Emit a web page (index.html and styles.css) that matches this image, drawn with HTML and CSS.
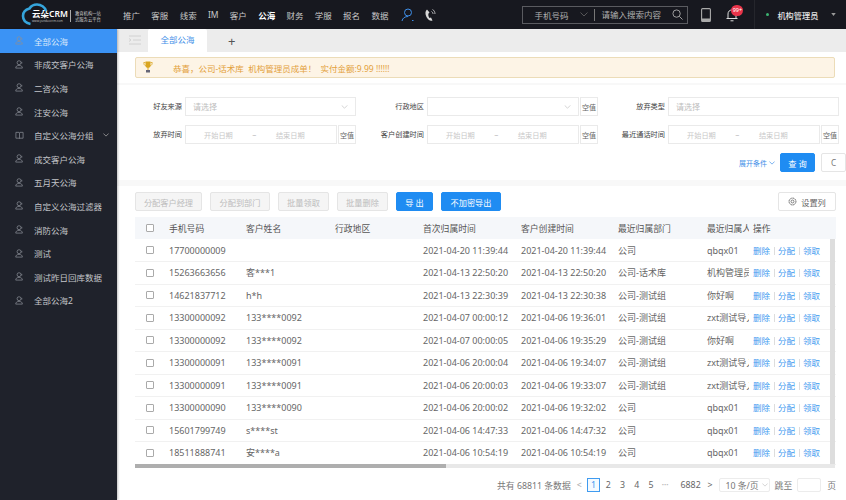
FILE: index.html
```html
<!DOCTYPE html>
<html lang="zh">
<head>
<meta charset="utf-8">
<title>全部公海</title>
<link rel="stylesheet" href="styles.css">
</head>
<body>
<div class="app">
  <header class="topbar">
    <div class="logo">
      <svg class="logo-cloud" viewBox="0 0 30 24" width="30" height="24"><path d="M25 8C24 4 20 1.500 16 1.500 12 1.500 10 3 8.500 5.500 4.500 6.500 2 9 2 13 2 17 4.500 20 9.500 21" fill="none" stroke="#35a5dc" stroke-width="2.600"/></svg>
      <div class="logo-main"><span class="logo-name">云朵CRM</span><span class="logo-url">www.yunduocrm.com</span></div>
      <div class="logo-sub"><span>教育机构一站</span><span>式服务云平台</span></div>
    </div>
    <nav class="nav">
      <a>推广</a><a>客服</a><a>线索</a><a>IM</a><a>客户</a><a class="on">公海</a><a>财务</a><a>学服</a><a>报名</a><a>数据</a>
    </nav>
    <svg class="ic-user" viewBox="0 0 14 14" width="14" height="14"><circle cx="7" cy="4.500" r="3.500" fill="none" stroke="#3f8fe8" stroke-width="1"/><path d="M1 13c.5-3 3-4.500 6-4.500M11 12.500h1.500" fill="none" stroke="#3f8fe8" stroke-width="1"/></svg>
    <svg class="ic-call" viewBox="0 0 14 14" width="14" height="14"><path d="M4 1.500C2 3 2 6 3.500 9s4 4.500 6 3.500l-1.500-3-1.500.5C5.500 9 5 6.500 5.500 5.500L6.500 4.500z" fill="#d8d8d8"/><path d="M8.500 3.500c1 .5 1.500 1.500 1.500 2.500M9.500 1.500c1.500.7 2.500 2.500 2.500 4.500" fill="none" stroke="#d8d8d8" stroke-width=".8"/></svg>
    <div class="search">
      <span class="search-type">手机号码</span>
      <svg class="chev-dark" viewBox="0 0 8 5" width="8" height="5"><path d="M.5.500 4 4 7.500.500" fill="none" stroke="#666" stroke-width=".8"/></svg>
      <span class="search-hint">请输入搜索内容</span>
      <svg class="search-ic" viewBox="0 0 12 12" width="11" height="11"><circle cx="5" cy="5" r="4" fill="none" stroke="#aaa" stroke-width="1"/><path d="m8 8 3.500 3.500" stroke="#aaa" stroke-width="1"/></svg>
    </div>
    <svg class="ic-pad" viewBox="0 0 10 14" width="10" height="14"><rect x=".6" y=".6" width="8.800" height="12.800" rx="1" fill="none" stroke="#aaa" stroke-width="1.100"/><rect x="1" y="10.500" width="8" height="3" fill="#aaa"/></svg>
    <div class="bell">
      <svg viewBox="0 0 12 14" width="12" height="14"><path d="M2 10.500V6c0-2.500 1.500-4 4-4s4 1.500 4 4v4.500zM.5 10.500h11M4.500 12.800h3" fill="none" stroke="#ddd" stroke-width="1"/></svg>
      <span class="badge">99+</span>
    </div>
    <div class="account">
      <i class="dot"></i><span>机构管理员</span>
      <svg viewBox="0 0 6 4" width="5" height="3"><path d="M0 0h6L3 4z" fill="#999"/></svg>
    </div>
  </header>
  <div class="body">
    <aside class="side">
      <a class="item active"><svg class="u"><use href="#user"/></svg>全部公海</a>
      <a class="item"><svg class="u"><use href="#user"/></svg>非成交客户公海</a>
      <a class="item"><svg class="u"><use href="#user"/></svg>二咨公海</a>
      <a class="item"><svg class="u"><use href="#user"/></svg>注安公海</a>
      <a class="item"><svg class="u" viewBox="0 0 10 10"><path d="M1 1.500h3.500L5 2l.5-.5H9v6.500H5.500L5 8.500 4.500 8H1zM5 2v6.500" fill="none" stroke="#8c9098" stroke-width=".8"/></svg>自定义公海分组<svg class="side-chev" viewBox="0 0 8 5" width="6" height="4"><path d="M.5.500 4 4 7.500.500" fill="none" stroke="#aaa" stroke-width="1"/></svg></a>
      <a class="item"><svg class="u"><use href="#user"/></svg>成交客户公海</a>
      <a class="item"><svg class="u"><use href="#user"/></svg>五月天公海</a>
      <a class="item"><svg class="u"><use href="#user"/></svg>自定义公海过滤器</a>
      <a class="item"><svg class="u"><use href="#user"/></svg>消防公海</a>
      <a class="item"><svg class="u"><use href="#user"/></svg>测试</a>
      <a class="item"><svg class="u"><use href="#user"/></svg>测试昨日回库数据</a>
      <a class="item"><svg class="u"><use href="#user"/></svg>全部公海2</a>
    </aside>
    <main class="main">
      <div class="tabs">
        <svg class="burger" viewBox="0 0 12 10" width="12" height="10"><path d="M0 1h12M4 5h8M0 9h12M0 3.500 2 5 0 6.500" fill="none" stroke="#ccc" stroke-width=".8"/></svg>
        <span class="tab">全部公海</span>
        <span class="plus">+</span>
      </div>
      <section class="notice-wrap">
        <div class="notice">
          <svg class="cup" viewBox="0 0 10 12" width="10" height="12"><path d="M2.500 .5h5v4c0 1.500-1 2.500-2.500 2.500S2.500 6 2.500 4.500z" fill="#d9a520"/><path d="M2.500 1.500H.8c0 2 .7 3 2 3.300M7.500 1.500h1.700c0 2-.7 3-2 3.300" fill="none" stroke="#d9a520" stroke-width=".8"/><rect x="3" y="9" width="4" height="2.500" fill="#667"/><rect x="4.500" y="7" width="1" height="2" fill="#d9a520"/></svg>
          <span>恭喜，公司-话术库 &nbsp;机构管理员成单！ &nbsp;实付金额:9.99 !!!!!!</span>
        </div>
      </section>
      <section class="filter">
        <div class="frow">
          <label>好友来源</label>
          <div class="field"><div class="ctl">请选择<svg class="chev" viewBox="0 0 8 5" width="7" height="4"><path d="M.5.500 4 4 7.500.500" fill="none" stroke="#bbb" stroke-width=".8"/></svg></div></div>
          <label>行政地区</label>
          <div class="field"><div class="ctl"><svg class="chev" viewBox="0 0 8 5" width="7" height="4"><path d="M.5.500 4 4 7.500.500" fill="none" stroke="#bbb" stroke-width=".8"/></svg></div><button class="nul">空值</button></div>
          <label>放弃类型</label>
          <div class="field"><div class="ctl">请选择</div></div>
        </div>
        <div class="frow">
          <label>放弃时间</label>
          <div class="field"><div class="ctl range"><span>开始日期</span><b>~</b><span>结束日期</span></div><button class="nul">空值</button></div>
          <label>客户创建时间</label>
          <div class="field"><div class="ctl range"><span>开始日期</span><b>~</b><span>结束日期</span></div><button class="nul">空值</button></div>
          <label>最近通话时间</label>
          <div class="field"><div class="ctl range"><span>开始日期</span><b>~</b><span>结束日期</span></div><button class="nul">空值</button></div>
        </div>
        <div class="factions">
          <a class="expand">展开条件<svg viewBox="0 0 8 5" width="6" height="4"><path d="M.5.500 4 4 7.500.500" fill="none" stroke="#3f8fe8" stroke-width=".9"/></svg></a>
          <button class="btn primary query">查 询</button>
          <button class="btn reset">C</button>
        </div>
      </section>
      <section class="list">
        <div class="toolbar">
          <button class="btn off w67">分配客户经理</button>
          <button class="btn off w60">分配到部门</button>
          <button class="btn off w51">批量领取</button>
          <button class="btn off w51">批量删除</button>
          <button class="btn primary w37">导 出</button>
          <button class="btn primary w60">不加密导出</button>
          <button class="btn cols"><svg viewBox="0 0 10 10" width="9" height="9"><circle cx="5" cy="5" r="1.600" fill="none" stroke="#555" stroke-width=".8"/><circle cx="5" cy="5" r="3.800" fill="none" stroke="#555" stroke-width="1" stroke-dasharray="1.500 .5"/></svg>设置列</button>
        </div>
        <div class="table-box">
          <table>
            <colgroup><col class="c0"><col class="c1"><col class="c2"><col class="c3"><col class="c4"><col class="c5"><col class="c6"><col class="c7"><col class="c8"></colgroup>
            <thead><tr><th><i class="cb"></i></th><th>手机号码</th><th>客户姓名</th><th>行政地区</th><th>首次归属时间</th><th>客户创建时间</th><th>最近归属部门</th><th>最近归属人</th><th class="act">操作</th></tr></thead>
            <tbody>
              <tr><td><i class="cb"></i></td><td>17700000009</td><td></td><td></td><td>2021-04-20 11:39:44</td><td>2021-04-20 11:39:44</td><td>公司</td><td>qbqx01</td><td class="act"><a>删除</a><s></s><a>分配</a><s></s><a>领取</a></td></tr>
              <tr><td><i class="cb"></i></td><td>15263663656</td><td>客***1</td><td></td><td>2021-04-13 22:50:20</td><td>2021-04-13 22:50:20</td><td>公司-话术库</td><td>机构管理员</td><td class="act"><a>删除</a><s></s><a>分配</a><s></s><a>领取</a></td></tr>
              <tr><td><i class="cb"></i></td><td>14621837712</td><td>h*h</td><td></td><td>2021-04-13 22:30:39</td><td>2021-04-13 22:30:38</td><td>公司-测试组</td><td>你好啊</td><td class="act"><a>删除</a><s></s><a>分配</a><s></s><a>领取</a></td></tr>
              <tr><td><i class="cb"></i></td><td>13300000092</td><td>133****0092</td><td></td><td>2021-04-07 00:00:12</td><td>2021-04-06 19:36:01</td><td>公司-测试组</td><td>zxt测试导入</td><td class="act"><a>删除</a><s></s><a>分配</a><s></s><a>领取</a></td></tr>
              <tr><td><i class="cb"></i></td><td>13300000092</td><td>133****0092</td><td></td><td>2021-04-07 00:00:05</td><td>2021-04-06 19:35:29</td><td>公司-测试组</td><td>你好啊</td><td class="act"><a>删除</a><s></s><a>分配</a><s></s><a>领取</a></td></tr>
              <tr><td><i class="cb"></i></td><td>13300000091</td><td>133****0091</td><td></td><td>2021-04-06 20:00:04</td><td>2021-04-06 19:34:07</td><td>公司-测试组</td><td>zxt测试导入</td><td class="act"><a>删除</a><s></s><a>分配</a><s></s><a>领取</a></td></tr>
              <tr><td><i class="cb"></i></td><td>13300000091</td><td>133****0091</td><td></td><td>2021-04-06 20:00:03</td><td>2021-04-06 19:33:07</td><td>公司-测试组</td><td>zxt测试导入</td><td class="act"><a>删除</a><s></s><a>分配</a><s></s><a>领取</a></td></tr>
              <tr><td><i class="cb"></i></td><td>13300000090</td><td>133****0090</td><td></td><td>2021-04-06 20:00:02</td><td>2021-04-06 19:32:02</td><td>公司</td><td>qbqx01</td><td class="act"><a>删除</a><s></s><a>分配</a><s></s><a>领取</a></td></tr>
              <tr><td><i class="cb"></i></td><td>15601799749</td><td>s****st</td><td></td><td>2021-04-06 14:47:33</td><td>2021-04-06 14:47:32</td><td>公司</td><td>qbqx01</td><td class="act"><a>删除</a><s></s><a>分配</a><s></s><a>领取</a></td></tr>
              <tr><td><i class="cb"></i></td><td>18511888741</td><td>安****a</td><td></td><td>2021-04-06 10:54:19</td><td>2021-04-06 10:54:19</td><td>公司</td><td>qbqx01</td><td class="act"><a>删除</a><s></s><a>分配</a><s></s><a>领取</a></td></tr>
            </tbody>
          </table>
          <div class="vbar"></div>
          <div class="hbar"><i></i></div>
        </div>
        <div class="pager">
          <span class="total">共有 68811 条数据</span>
          <span class="arrow">&lt;</span>
          <span class="pg cur">1</span><span class="pg">2</span><span class="pg">3</span><span class="pg">4</span><span class="pg">5</span><span class="pg dots">•••</span><span class="pg far">6882</span>
          <span class="arrow next">&gt;</span>
          <span class="size">10 条/页<svg viewBox="0 0 8 5" width="6" height="4"><path d="M.5.500 4 4 7.500.500" fill="none" stroke="#bbb" stroke-width=".8"/></svg></span>
          <span class="jump">跳至</span><span class="jump-in"></span><span class="jump-end">页</span>
        </div>
      </section>
    </main>
  </div>
</div>
<svg class="defs" width="0" height="0"><symbol id="user" viewBox="0 0 10 10"><circle cx="4.500" cy="3" r="2.200" fill="none" stroke="#8c9098" stroke-width=".8"/><path d="M.8 9c0-2 1.500-3 3.700-3s3.700 1 3.700 3zM7.500 2v2" fill="none" stroke="#8c9098" stroke-width=".8"/></symbol></svg>
</body>
</html>
```
FILE: styles.css
```css
* { box-sizing: border-box; }
html, body { margin: 0; height: 500px; overflow: hidden; }
body { font-family: "Noto Sans", "Noto Sans CJK SC", sans-serif; font-size: 9px; color: #666; background: #fff; }
button { font-family: inherit; font-size: inherit; margin: 0; cursor: pointer; }
.defs { position: absolute; }
.app { width: 846px; height: 500px; display: flex; flex-direction: column; }

/* top bar */
.topbar { height: 29px; flex: none; background: #17181f; display: flex; align-items: center; color: #c8c8c8; }
.logo { width: 123px; height: 29px; flex: none; display: flex; align-items: center; padding: 3px 0 0 21px; position: relative; color: #fff; }
.logo-cloud { position: absolute; left: 21px; top: 3px; }
.logo-main { margin-left: 11px; display: flex; flex-direction: column; line-height: 1; width: 37px; }
.logo-name { font-size: 8.5px; font-weight: 600; white-space: nowrap; line-height: 10px; }
.logo-url { font-size: 3px; color: #bbb; white-space: nowrap; line-height: 4px; }
.logo-sub { margin-left: 1px; padding-left: 4px; border-left: 1px solid #aaa; display: flex; flex-direction: column; font-size: 4.3px; line-height: 6px; color: #ccc; white-space: nowrap; }
.nav { display: flex; gap: 11.3px; font-size: 8.5px; white-space: nowrap; }
.nav .on { color: #fff; font-weight: 700; }
.ic-user { margin-left: 13px; flex: none; }
.ic-call { margin-left: 8px; flex: none; }
.search { margin-left: 85px; width: 166px; height: 18px; flex: none; border: 1px solid #5a5b60; display: flex; align-items: center; font-size: 8.5px; color: #b0b0b0; white-space: nowrap; }
.search-type { margin-left: 11px; }
.chev-dark { margin-left: 12px; }
.search-hint { margin-left: 6px; padding-left: 6px; border-left: 1px solid #777; line-height: 12px; }
.search-ic { margin-left: 11px; }
.ic-pad { margin-left: 13px; flex: none; }
.bell { margin-left: 15px; width: 29px; height: 29px; flex: none; display: flex; align-items: center; position: relative; border-right: 1px solid #25262c; }
.badge { position: absolute; left: 5px; top: 5px; height: 11px; width: 12px; border-radius: 6px; background: #e8344a; color: #fff; font-size: 5.5px; line-height: 11px; text-align: center; }
.account { margin-left: 11px; display: flex; align-items: center; color: #e6e6e6; font-size: 8.2px; font-weight: 500; white-space: nowrap; }
.dot { width: 3px; height: 3px; border-radius: 50%; background: #3cb371; margin-right: 8px; }
.account svg { margin-left: 13px; }

/* body */
.body { flex: 1; display: flex; min-height: 0; }
.side { width: 117px; flex: none; background: #1f222b; box-shadow: 1px 0 2px rgba(0,0,0,.25); position: relative; z-index: 1; }
.item { height: 23.6px; display: flex; align-items: center; padding-left: 15px; color: #c4c6ca; font-size: 8.5px; white-space: nowrap; }
.item.active { background: #3b93f5; color: #d8e8fb; }
.u { width: 9px; height: 9px; margin-right: 10px; flex: none; }
.side-chev { margin-left: 9px; }
.main { flex: 1; min-width: 0; overflow: hidden; background: #f8f8f8; }

/* tabs */
.tabs { height: 23px; background: #ececec; display: flex; align-items: stretch; }
.burger { margin: 6px 0 0 12px; }
.tab { margin-left: 7px; width: 59px; background: #fff; color: #3f8fe8; text-align: center; font-size: 8.5px; line-height: 22px; border-radius: 2px 2px 0 0; }
.plus { margin-left: 21px; font-size: 13px; line-height: 25px; color: #555; }

/* notice */
.notice-wrap { height: 33px; padding: 5px 11px 0 18px; background: #fff; border-bottom: 2px solid #f8f8f8; }
.notice { height: 21px; background: #fdf4e6; border: 1px solid #ecdcb8; border-radius: 2px; display: flex; align-items: center; padding-left: 7px; color: #e3a13c; font-size: 8.5px; white-space: nowrap; }
.cup { margin-right: 20px; margin-top: -2px; }

/* filter */
.filter { height: 95px; padding-top: 12px; background: #fff; }
.frow { height: 19px; margin-bottom: 9px; display: grid; grid-template-columns: 65px 171px 71px 171px 70px 171px; margin-left: 3px; }
.frow label { text-align: right; padding-right: 3px; line-height: 19px; color: #444; font-size: 7.2px; white-space: nowrap; }
.field { display: flex; gap: 1.5px; }
.ctl { flex: 1; min-width: 0; border: 1px solid #eaeaea; display: flex; align-items: center; padding-left: 7px; color: #bdbdbd; font-size: 8px; position: relative; white-space: nowrap; }
.chev { position: absolute; right: 7px; top: 7px; }
.range { justify-content: flex-start; gap: 19.5px; padding: 0 0 0 18px; font-size: 7.2px; color: #c8c8c8; }
.range b { font-weight: 400; color: #aaa; }
.nul { width: 18px; flex: none; padding: 0; border: 1px solid #eaeaea; background: #fff; color: #666; font-size: 7px; white-space: nowrap; }
.factions { display: flex; align-items: center; justify-content: flex-end; height: 19px; }
.expand { color: #3f8fe8; font-size: 7px; display: flex; align-items: center; gap: 2px; margin-right: 5px; white-space: nowrap; }

/* buttons */
.btn { height: 19px; padding: 0; border: 1px solid #e5e5e5; border-radius: 2px; background: #fff; color: #666; white-space: nowrap; font-size: 8.2px; }
.btn.primary { background: #1f8cf2; border-color: #1f8cf2; color: #fff; }
.btn.off { background: #f5f5f5; color: #bcbcbc; }
.query { width: 35px; flex: none; }
.reset { width: 25px; margin-left: 6px; color: #777; flex: none; }
.w67 { width: 67px; } .w60 { width: 60px; } .w51 { width: 51px; } .w37 { width: 37px; }

/* list */
.list { margin-top: 6px; height: 314px; background: #fff; padding: 6px 10px 0 18px; }
.toolbar { display: flex; gap: 8px; height: 19px; }
.cols { margin-left: auto; width: 58px; display: flex; align-items: center; justify-content: center; gap: 4px; }
.table-box { margin-top: 6px; position: relative; height: 251px; overflow: hidden; }
table { border-collapse: collapse; table-layout: fixed; width: 701px; }
.c0 { width: 27px; } .c1 { width: 77px; } .c2 { width: 89px; } .c3 { width: 88px; } .c4 { width: 98px; } .c5 { width: 97px; } .c6 { width: 89px; } .c7 { width: 49px; } .c8 { width: 87px; }
th, td { padding: 0 0 0 7px; white-space: nowrap; overflow: hidden; text-align: left; font-weight: 400; }
th { height: 22px; background: #f5f7fa; color: #555; font-size: 8.8px; }
td { height: 22.5px; border-bottom: 1px solid #f1f1f1; color: #666; }
th:first-child, td:first-child { padding: 0 0 0 11px; }
th.act, td.act { padding-left: 4px; position: relative; box-shadow: -2px 0 3px rgba(0,0,0,.08); overflow: visible; }
td.act { background: #fff; }
.act a { color: #3f9bf0; font-size: 8.5px; }
.act s { display: inline-block; width: 1px; height: 8px; background: #ddd; margin: 0 3.5px; vertical-align: -1px; }
.cb { display: block; width: 8px; height: 8px; border: 1px solid #aaa; border-radius: 1px; background: #fff; }
.vbar { position: absolute; left: 695px; top: 22px; width: 5px; height: 225px; background: #ddd; }
.hbar { position: absolute; left: 0; top: 247px; width: 700px; height: 4px; background: #e8e8e8; }
.hbar i { display: block; width: 311px; height: 4px; background: #aeaeae; }

/* pagination */
.pager { display: flex; align-items: center; height: 14px; margin-top: 10px; position: relative; color: #777; font-size: 8.8px; white-space: nowrap; padding-left: 362px; }
.arrow { margin-left: 6px; width: 6px; color: #aaa; }
.pg { width: 14px; text-align: center; color: #666; margin-left: 0.5px; }
.cur { margin-left: 4px; margin-right: 0.5px; border: 1px solid #3f9bf0; color: #3f9bf0; height: 14px; line-height: 12px; background: #f4faff; }
.dots { color: #bbb; font-size: 6px; }
.far { width: 20px; margin-left: 8.5px; }
.next { margin-left: 7px; color: #666; }
.size { margin-left: 6px; width: 51px; height: 14px; display: flex; align-items: center; gap: 3px; padding-left: 5px; border: 1px solid #ececec; border-radius: 2px; }
.jump { margin-left: 5px; }
.jump-in { margin-left: 4.5px; width: 25px; height: 14px; border: 1px solid #ececec; border-radius: 2px; }
.jump-end { margin-left: 6px; }
```
